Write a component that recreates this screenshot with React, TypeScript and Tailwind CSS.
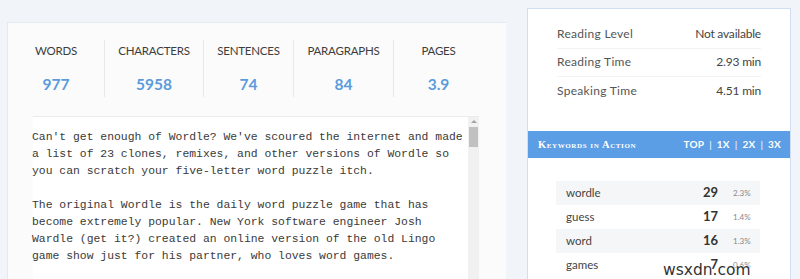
import React from "react";

const stats = [
  { label: "WORDS", value: "977", w: "w-[97px]" },
  { label: "CHARACTERS", value: "5958", w: "w-[99px]" },
  { label: "SENTENCES", value: "74", w: "w-[90px]" },
  { label: "PARAGRAPHS", value: "84", w: "w-[100px]" },
  { label: "PAGES", value: "3.9", w: "w-[89px]" },
];

const readings = [
  { label: "Reading Level", value: "Not available" },
  { label: "Reading Time", value: "2.93 min" },
  { label: "Speaking Time", value: "4.51 min" },
];

const keywords = [
  { word: "wordle", count: "29", pct: "2.3%" },
  { word: "guess", count: "17", pct: "1.4%" },
  { word: "word", count: "16", pct: "1.3%" },
  { word: "games", count: "7", pct: "0.6%" },
];

const text = `Can't get enough of Wordle? We've scoured the internet and made
a list of 23 clones, remixes, and other versions of Wordle so
you can scratch your five-letter word puzzle itch.

The original Wordle is the daily word puzzle game that has
become extremely popular. New York software engineer Josh
Wardle (get it?) created an online version of the old Lingo
game show just for his partner, who loves word games.`;

const App = () => {
  return (
    <div className="relative w-[800px] h-[279px] overflow-hidden bg-[#f1f5fa] flex font-['Lato',sans-serif]">
      {/* left card */}
      <div className="ml-[7px] mt-[22px] w-[499px] bg-[#fbfbfb] border-l border-t border-[#e4e9ef] flex flex-col">
        <div className="flex pt-[17px] h-[93px]">
          {stats.map((s, i) => (
            <div
              key={s.label}
              className={`${s.w} h-[57px] flex flex-col items-center ${
                i < stats.length - 1 ? "border-r border-[#e6e9ec]" : ""
              }`}
            >
              <div className="mt-[3px] text-[11.5px] text-[#3d3d3d] tracking-[-0.2px] leading-[16px]">{s.label}</div>
              <div className="mt-[15px] text-[15.5px] font-bold text-[#5b9bdc] leading-[20px]">{s.value}</div>
            </div>
          ))}
        </div>
        <div className="ml-[25px] w-[446px] flex-1 bg-white border-t border-[#e9ecef] flex">
          <div className="flex-1 pt-[12px] pl-[-1px] font-['Liberation_Mono',monospace] text-[11.4px] leading-[17px] text-[#3a3a3a] whitespace-pre -ml-[1px]">
            {text}
          </div>
          <div className="w-[11px] bg-[#f1f1f1] flex flex-col items-center pt-[3px]">
            <div className="w-0 h-0 border-l-[3px] border-r-[3px] border-b-[3px] border-l-transparent border-r-transparent border-b-[#a3a3a3]" />
            <div className="mt-[4px] w-[9px] h-[20px] bg-[#c1c1c1]" />
          </div>
        </div>
      </div>

      {/* right panel */}
      <div className="ml-[21px] mt-[8px] w-[264px] bg-white border-l border-r border-t border-[#cfdff1] flex flex-col">
        <div className="px-[29px] pt-[11px] h-[122px]">
          {readings.map((r, i) => (
            <div
              key={r.label}
              className={`flex justify-between items-center h-[28.5px] text-[12px] text-[#555] tracking-[0.3px] ${
                i < readings.length - 1 ? "border-b border-[#f0f2f4]" : ""
              }`}
            >
              <span>{r.label}</span>
              <span className="text-[#444] tracking-[-0.2px]">{r.value}</span>
            </div>
          ))}
        </div>
        <div className="h-[27px] bg-[#5b9ee6] flex items-center justify-between pl-[10px] pr-[9px] text-white font-bold">
          <span className="text-[10.5px] [font-variant:small-caps] tracking-[0.6px] font-['Liberation_Serif',serif]">
            Keywords in Action
          </span>
          <span className="text-[10px] tracking-[0.2px] flex gap-[5px]">
            <span>TOP</span>
            <span className="font-normal">|</span>
            <span>1X</span>
            <span className="font-normal">|</span>
            <span>2X</span>
            <span className="font-normal">|</span>
            <span>3X</span>
          </span>
        </div>
        <div className="pt-[23px] pl-[28px] pr-[30px]">
          {keywords.map((k, i) => (
            <div
              key={k.word}
              className={`flex items-center h-[24px] ${i % 2 === 0 ? "bg-[#f5f6f7]" : ""}`}
            >
              <span className="pl-[10px] flex-1 text-[11.5px] text-[#444]">{k.word}</span>
              <span className="w-[30px] text-right text-[13px] font-bold text-[#333]">{k.count}</span>
              <span className="w-[42px] pl-[15px] text-[8px] text-[#888]">{k.pct}</span>
            </div>
          ))}
        </div>
      </div>

      <div className="absolute left-[663px] top-[261px] text-[15.5px] leading-[18px] text-[#333] font-['DejaVu_Sans',sans-serif] [text-shadow:0_0_2px_#fff,0_0_2px_#fff]">
        wsxdn.com
      </div>
    </div>
  );
};

export default App;
